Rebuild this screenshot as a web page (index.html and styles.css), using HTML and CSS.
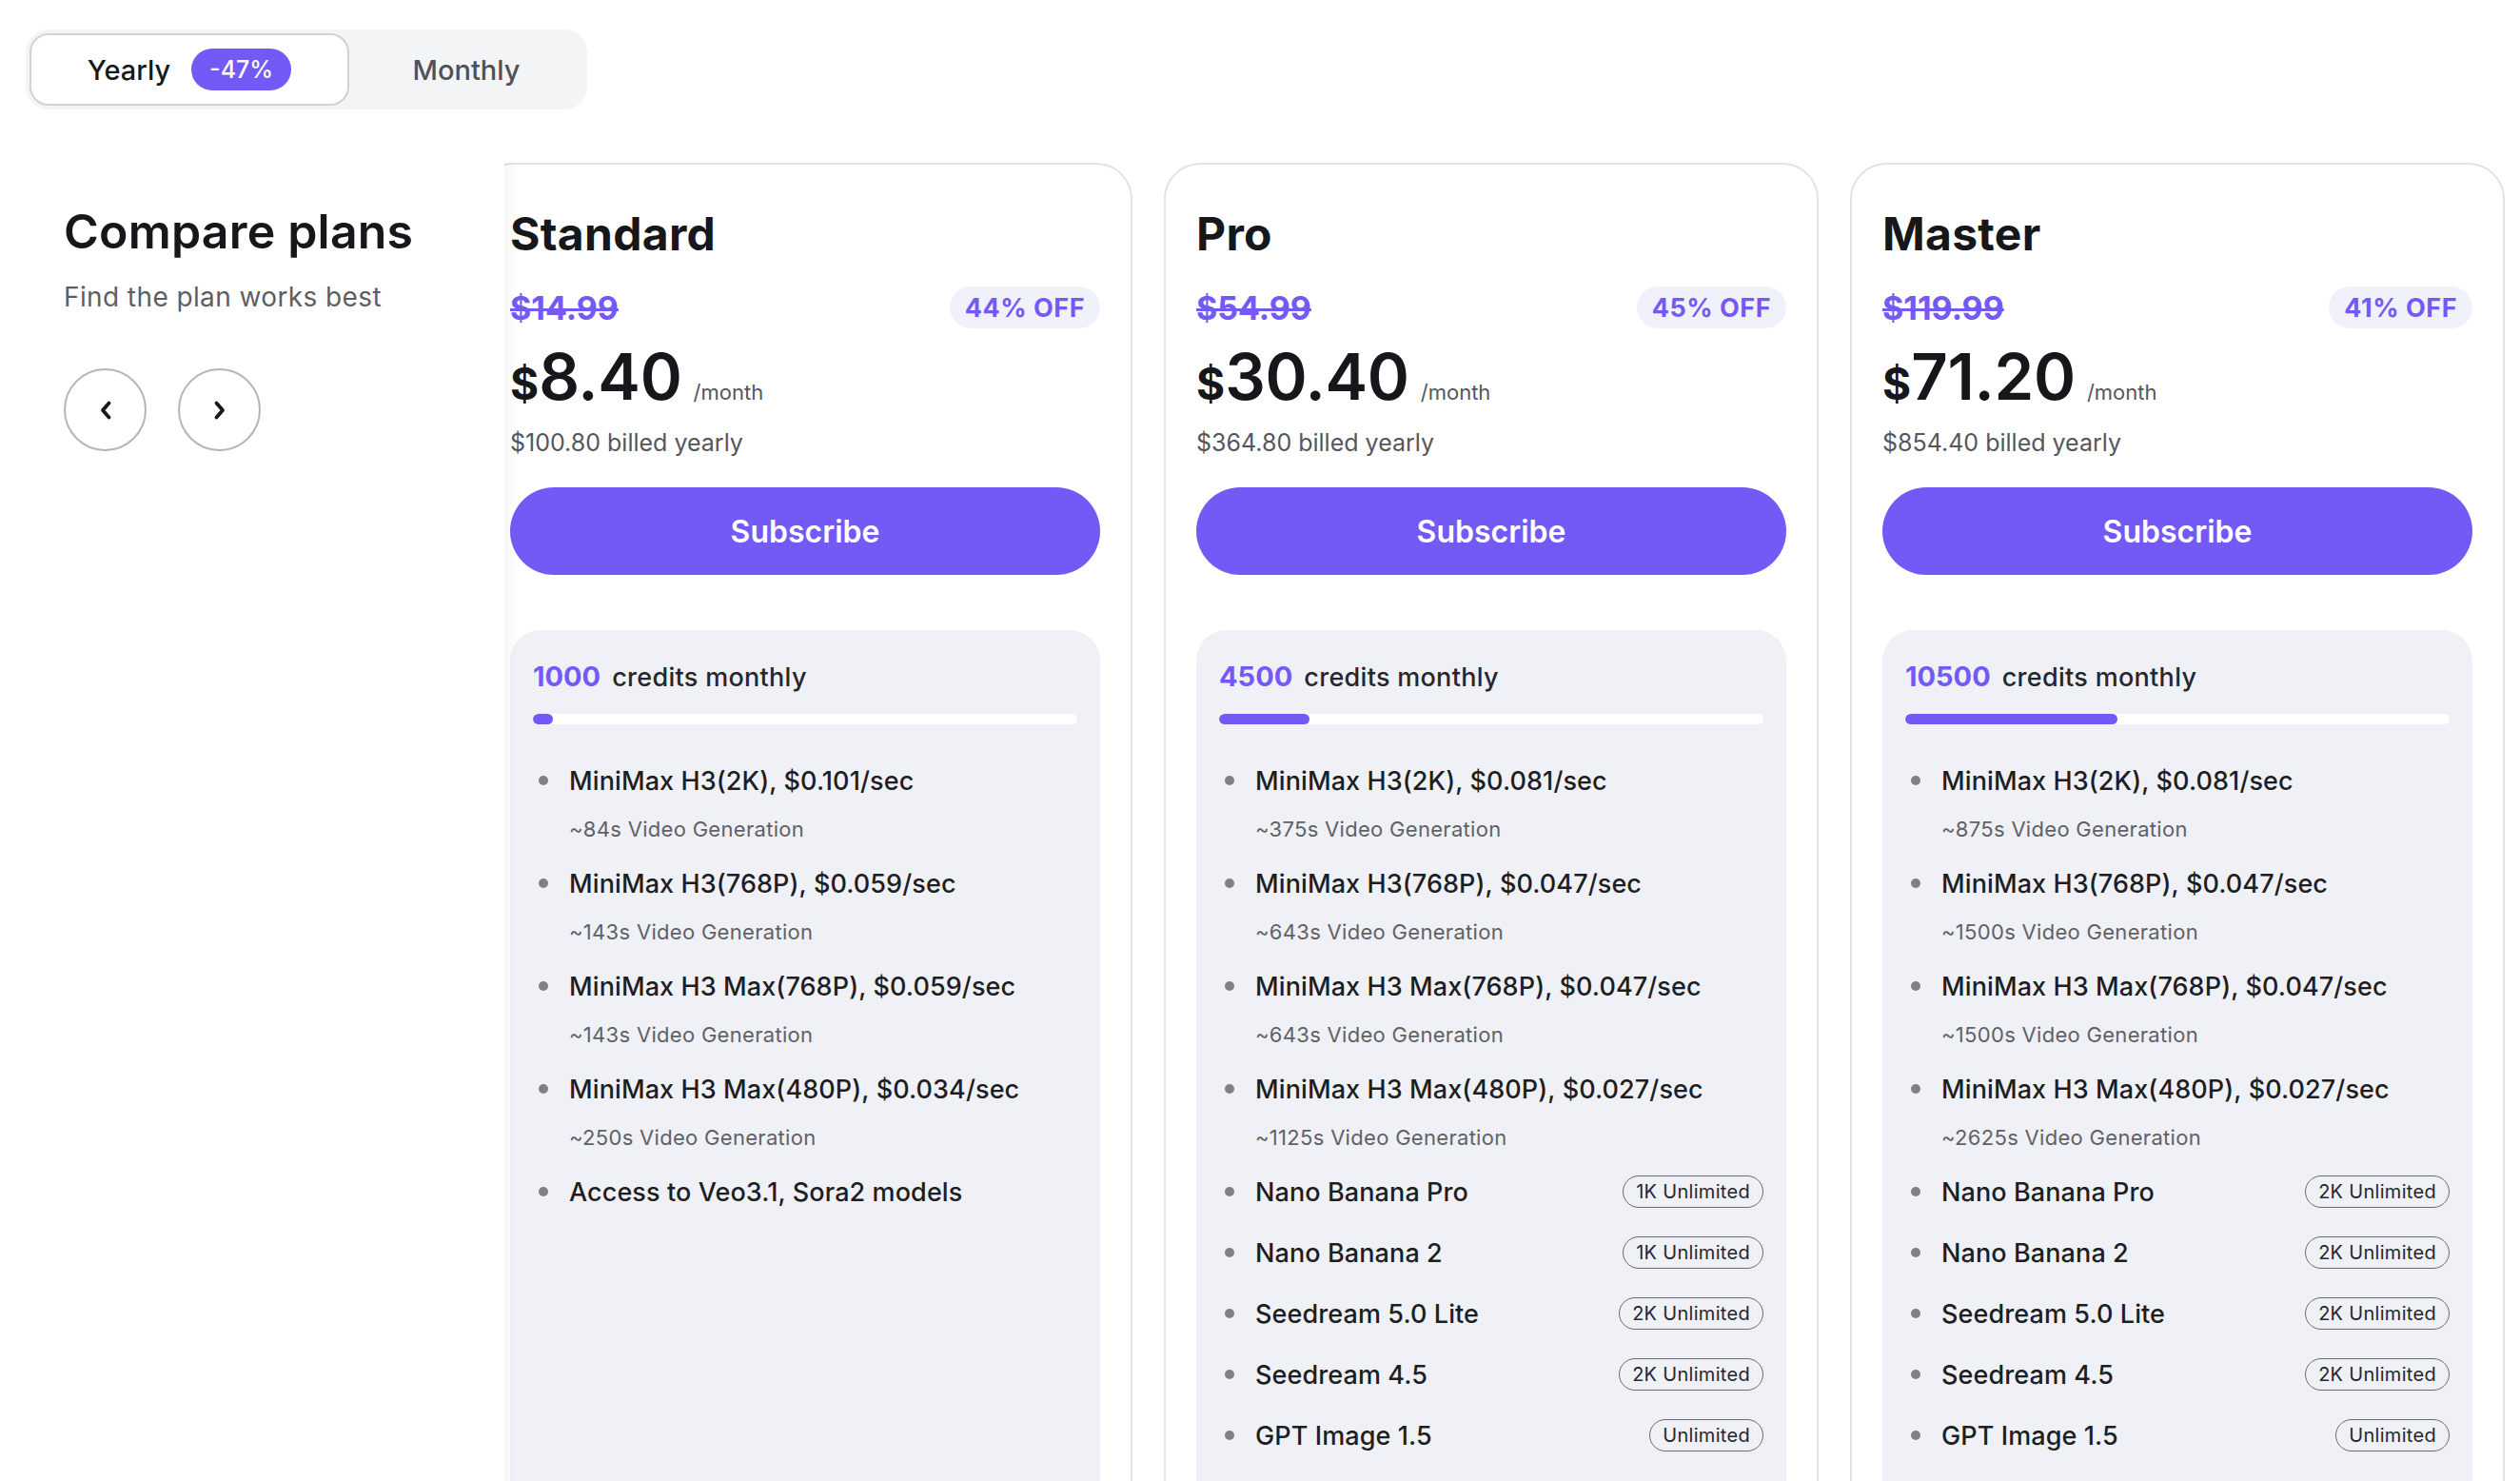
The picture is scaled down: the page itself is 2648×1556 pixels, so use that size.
FILE: index.html
```html
<!DOCTYPE html>
<html lang="en">
<head>
<meta charset="utf-8">
<title>Compare plans</title>
<link rel="stylesheet" href="styles.css">
</head>
<body>
<div class="page">
  <div class="toggle">
    <div class="seg seg-active"><span>Yearly</span><span class="save">-47%</span></div>
    <div class="seg seg-idle">Monthly</div>
  </div>

  <div class="main">
    <aside class="intro">
      <h1 class="intro-title">Compare plans</h1>
      <p class="intro-sub">Find the plan works best</p>
      <div class="nav">
        <button class="nav-btn" aria-label="Previous">
          <svg width="14" height="22" viewBox="0 0 14 22"><path d="M10.5 3.5 L4 11 L10.5 18.5" fill="none" stroke="#17181c" stroke-width="3.8" stroke-linecap="round" stroke-linejoin="round"/></svg>
        </button>
        <button class="nav-btn" aria-label="Next">
          <svg width="14" height="22" viewBox="0 0 14 22"><path d="M3.5 3.5 L10 11 L3.5 18.5" fill="none" stroke="#17181c" stroke-width="3.8" stroke-linecap="round" stroke-linejoin="round"/></svg>
        </button>
      </div>
    </aside>

    <div class="viewport">
      <div class="track">

        <section class="card">
          <h2 class="plan">Standard</h2>
          <div class="was-row"><span class="was">$14.99</span><span class="off">44% OFF</span></div>
          <div class="price"><span class="cur">$</span><span class="amt">8.40</span><span class="per">/month</span></div>
          <div class="billed">$100.80 billed yearly</div>
          <button class="subscribe">Subscribe</button>
          <div class="credits">
            <div class="credits-line"><span class="num">1000</span><span class="lbl">credits monthly</span></div>
            <div class="bar"><div class="fill" style="width:3.7%"></div></div>
            <ul class="feats">
              <li><div class="f-main"><i class="dot"></i><span class="f-name">MiniMax H3(2K), $0.101/sec</span></div><div class="f-sub">~84s Video Generation</div></li>
              <li><div class="f-main"><i class="dot"></i><span class="f-name">MiniMax H3(768P), $0.059/sec</span></div><div class="f-sub">~143s Video Generation</div></li>
              <li><div class="f-main"><i class="dot"></i><span class="f-name">MiniMax H3 Max(768P), $0.059/sec</span></div><div class="f-sub">~143s Video Generation</div></li>
              <li><div class="f-main"><i class="dot"></i><span class="f-name">MiniMax H3 Max(480P), $0.034/sec</span></div><div class="f-sub">~250s Video Generation</div></li>
              <li><div class="f-main"><i class="dot"></i><span class="f-name">Access to Veo3.1, Sora2 models</span></div></li>
            </ul>
          </div>
        </section>

        <section class="card">
          <h2 class="plan">Pro</h2>
          <div class="was-row"><span class="was">$54.99</span><span class="off">45% OFF</span></div>
          <div class="price"><span class="cur">$</span><span class="amt">30.40</span><span class="per">/month</span></div>
          <div class="billed">$364.80 billed yearly</div>
          <button class="subscribe">Subscribe</button>
          <div class="credits">
            <div class="credits-line"><span class="num">4500</span><span class="lbl">credits monthly</span></div>
            <div class="bar"><div class="fill" style="width:16.6%"></div></div>
            <ul class="feats">
              <li><div class="f-main"><i class="dot"></i><span class="f-name">MiniMax H3(2K), $0.081/sec</span></div><div class="f-sub">~375s Video Generation</div></li>
              <li><div class="f-main"><i class="dot"></i><span class="f-name">MiniMax H3(768P), $0.047/sec</span></div><div class="f-sub">~643s Video Generation</div></li>
              <li><div class="f-main"><i class="dot"></i><span class="f-name">MiniMax H3 Max(768P), $0.047/sec</span></div><div class="f-sub">~643s Video Generation</div></li>
              <li><div class="f-main"><i class="dot"></i><span class="f-name">MiniMax H3 Max(480P), $0.027/sec</span></div><div class="f-sub">~1125s Video Generation</div></li>
              <li><div class="f-main"><i class="dot"></i><span class="f-name">Nano Banana Pro</span><span class="tag">1K Unlimited</span></div></li>
              <li><div class="f-main"><i class="dot"></i><span class="f-name">Nano Banana 2</span><span class="tag">1K Unlimited</span></div></li>
              <li><div class="f-main"><i class="dot"></i><span class="f-name">Seedream 5.0 Lite</span><span class="tag">2K Unlimited</span></div></li>
              <li><div class="f-main"><i class="dot"></i><span class="f-name">Seedream 4.5</span><span class="tag">2K Unlimited</span></div></li>
              <li><div class="f-main"><i class="dot"></i><span class="f-name">GPT Image 1.5</span><span class="tag">Unlimited</span></div></li>
            </ul>
          </div>
        </section>

        <section class="card">
          <h2 class="plan">Master</h2>
          <div class="was-row"><span class="was">$119.99</span><span class="off">41% OFF</span></div>
          <div class="price"><span class="cur">$</span><span class="amt">71.20</span><span class="per">/month</span></div>
          <div class="billed">$854.40 billed yearly</div>
          <button class="subscribe">Subscribe</button>
          <div class="credits">
            <div class="credits-line"><span class="num">10500</span><span class="lbl">credits monthly</span></div>
            <div class="bar"><div class="fill" style="width:38.9%"></div></div>
            <ul class="feats">
              <li><div class="f-main"><i class="dot"></i><span class="f-name">MiniMax H3(2K), $0.081/sec</span></div><div class="f-sub">~875s Video Generation</div></li>
              <li><div class="f-main"><i class="dot"></i><span class="f-name">MiniMax H3(768P), $0.047/sec</span></div><div class="f-sub">~1500s Video Generation</div></li>
              <li><div class="f-main"><i class="dot"></i><span class="f-name">MiniMax H3 Max(768P), $0.047/sec</span></div><div class="f-sub">~1500s Video Generation</div></li>
              <li><div class="f-main"><i class="dot"></i><span class="f-name">MiniMax H3 Max(480P), $0.027/sec</span></div><div class="f-sub">~2625s Video Generation</div></li>
              <li><div class="f-main"><i class="dot"></i><span class="f-name">Nano Banana Pro</span><span class="tag">2K Unlimited</span></div></li>
              <li><div class="f-main"><i class="dot"></i><span class="f-name">Nano Banana 2</span><span class="tag">2K Unlimited</span></div></li>
              <li><div class="f-main"><i class="dot"></i><span class="f-name">Seedream 5.0 Lite</span><span class="tag">2K Unlimited</span></div></li>
              <li><div class="f-main"><i class="dot"></i><span class="f-name">Seedream 4.5</span><span class="tag">2K Unlimited</span></div></li>
              <li><div class="f-main"><i class="dot"></i><span class="f-name">GPT Image 1.5</span><span class="tag">Unlimited</span></div></li>
            </ul>
          </div>
        </section>

      </div>
    </div>
  </div>
</div>
</body>
</html>
```

FILE: styles.css
```css
* { box-sizing: border-box; }
html, body { margin: 0; padding: 0; overflow: hidden; background: #fff; }
body {
  font-family: Inter, "Noto Sans", "Liberation Sans", sans-serif;
  color: #16171b;
  width: 2648px;
  height: 1556px;
}
.page { padding: 31px 0 0 27px; }

/* billing toggle */
.toggle {
  display: flex;
  width: 590px;
  height: 84px;
  padding: 4px;
  background: #f3f4f6;
  border-radius: 24px;
}
.seg {
  display: flex;
  align-items: center;
  justify-content: center;
  font-size: 29px;
  font-weight: 500;
}
.seg-active {
  width: 336px;
  gap: 22px;
  background: #fff;
  border: 2px solid #d2d2d4;
  border-radius: 20px;
  color: #17181c;
}
.seg-idle { flex: 1; color: #505157; }
.save {
  display: inline-flex;
  align-items: center;
  height: 44px;
  padding: 0 19px;
  background: #735af6;
  color: #fff;
  border-radius: 22px;
  font-size: 25px;
  font-weight: 500;
}

/* main */
.main { display: flex; margin-top: 56px; }
.intro { width: 503px; flex: none; padding: 43px 0 0 40px; }
.intro-title { margin: 0; font-size: 50px; line-height: 58px; font-weight: 600; letter-spacing: 0.2px; color: #16171b; }
.intro-sub { margin: 21px 0 0; font-size: 28px; line-height: 38px; color: #5d5e64; letter-spacing: 0.4px; }
.nav { display: flex; gap: 33px; margin-top: 56px; }
.nav-btn {
  width: 87px; height: 87px;
  border-radius: 50%;
  border: 2px solid #b5b5b7;
  background: #fff;
  display: flex; align-items: center; justify-content: center;
  padding: 0;
}

.viewport { flex: 1; overflow: hidden; position: relative; }
.viewport::before {
  content: "";
  position: absolute; left: 0; top: 0; bottom: 0; width: 14px;
  background: linear-gradient(to right, rgba(0,0,0,0.035), rgba(0,0,0,0));
  z-index: 2;
}
.track { display: flex; gap: 33px; margin-left: -28px; }

.card {
  width: 688px; flex: none;
  border: 2px solid #e3e3e5;
  border-radius: 38px;
  padding: 44px 32px 34px;
  display: flex; flex-direction: column;
  background: #fff;
}
.plan { margin: 0; font-size: 48px; line-height: 58px; font-weight: 700; letter-spacing: 0.3px; color: #16171b; }
.was-row { display: flex; justify-content: space-between; align-items: center; margin-top: 26px; height: 44px; }
.was {
  font-size: 34px; font-weight: 700; color: #735af6;
  text-decoration: line-through; text-decoration-thickness: 3px;
}
.off {
  display: inline-flex; align-items: center;
  height: 44px; padding: 0 16px;
  background: #f1f1fb; color: #735af6;
  border-radius: 22px;
  font-size: 27px; font-weight: 700; letter-spacing: 0.5px;
}
.price { display: flex; align-items: baseline; margin-top: 15px; height: 72px; line-height: 72px; }
.cur { font-size: 46px; font-weight: 700; }
.amt { font-size: 67px; font-weight: 600; letter-spacing: -0.3px; }
.per { font-size: 22px; color: #55565c; margin-left: 12px; }
.billed { margin-top: 15px; font-size: 25px; line-height: 36px; color: #55565c; }
.subscribe {
  margin-top: 29px;
  height: 92px; width: 100%;
  border: 0; border-radius: 46px;
  background: #735af6; color: #fff;
  font-family: inherit; font-size: 32px; font-weight: 600;
}
.credits {
  margin-top: 58px;
  flex: 1;
  background: #f0f1f6;
  border-radius: 32px;
  padding: 24px 24px 24px;
  min-height: 1000px;
}
.credits-line { display: flex; align-items: baseline; gap: 12px; line-height: 50px; }
.num { font-size: 29px; font-weight: 700; color: #735af6; }
.lbl { font-size: 27px; font-weight: 500; color: #26272c; letter-spacing: 0.3px; }
.bar { margin-top: 13px; height: 11px; background: #fff; border-radius: 6px; overflow: hidden; }
.fill { height: 100%; background: #735af6; border-radius: 6px; min-width: 21px; }

.feats { list-style: none; margin: 39px 0 0; padding: 0; display: flex; flex-direction: column; gap: 24px; }
.f-main { display: flex; align-items: center; height: 40px; }
.dot { width: 10px; height: 10px; border-radius: 50%; background: #808085; margin: 0 22px 0 6px; flex: none; }
.f-name { flex: 1; font-size: 27px; font-weight: 500; color: #1d1e22; letter-spacing: 0.1px; white-space: nowrap; }
.f-sub { margin-top: 18px; padding-left: 38px; font-size: 22px; line-height: 26px; color: #606167; letter-spacing: 0.3px; }
.tag {
  display: inline-flex; align-items: center;
  height: 34px; padding: 0 13px;
  border: 1.5px solid #6b6c72; border-radius: 17px;
  font-size: 20px; color: #26272c; letter-spacing: 0.3px;
}
```
